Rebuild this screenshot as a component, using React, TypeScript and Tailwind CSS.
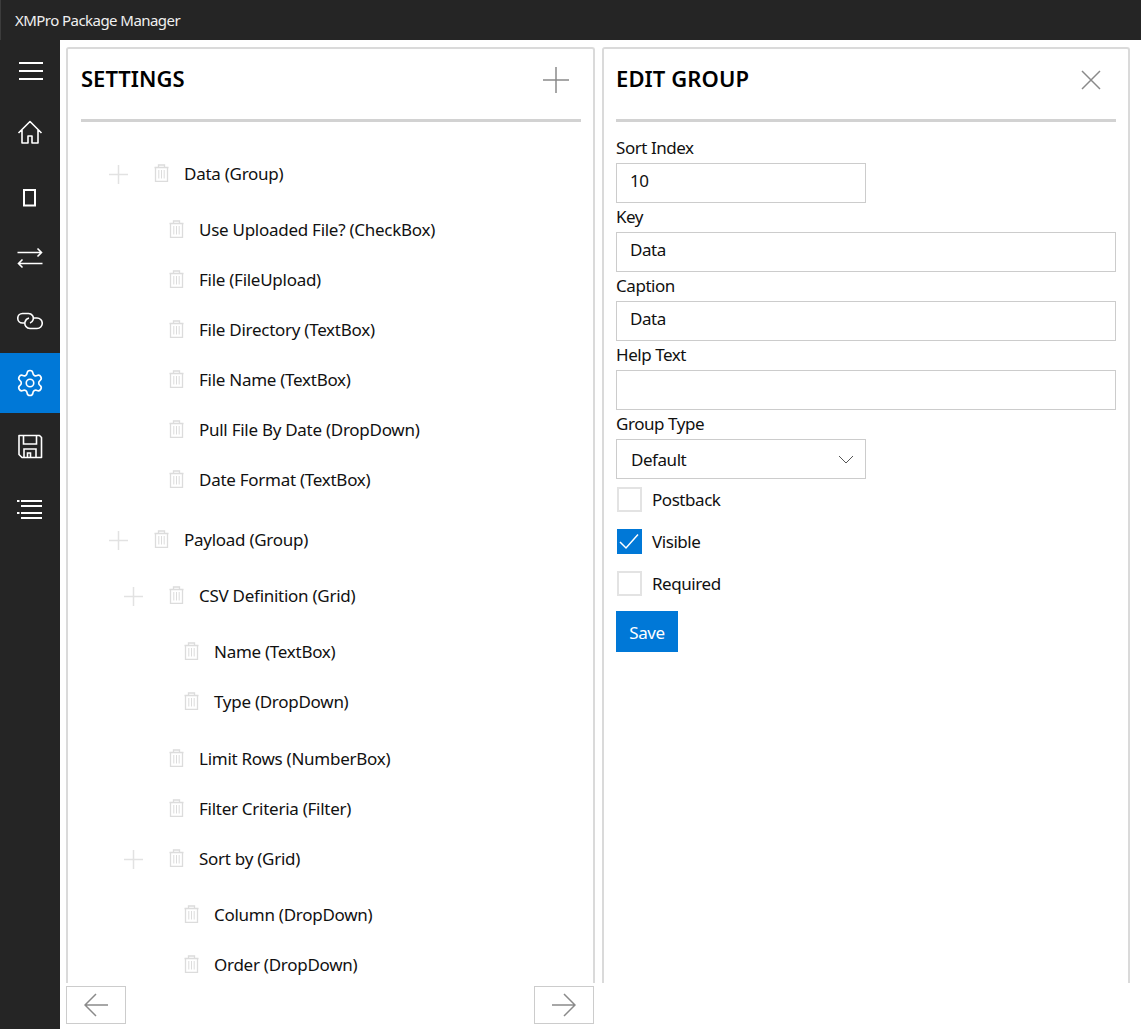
import type { ReactNode } from 'react'
import { Settings } from 'lucide-react'

type TreeNode = { label: string; expand?: boolean; children?: TreeNode[] }

const tree: TreeNode[] = [
  {
    label: 'Data (Group)',
    expand: true,
    children: [
      { label: 'Use Uploaded File? (CheckBox)' },
      { label: 'File (FileUpload)' },
      { label: 'File Directory (TextBox)' },
      { label: 'File Name (TextBox)' },
      { label: 'Pull File By Date (DropDown)' },
      { label: 'Date Format (TextBox)' },
    ],
  },
  {
    label: 'Payload (Group)',
    expand: true,
    children: [
      {
        label: 'CSV Definition (Grid)',
        expand: true,
        children: [{ label: 'Name (TextBox)' }, { label: 'Type (DropDown)' }],
      },
      { label: 'Limit Rows (NumberBox)' },
      { label: 'Filter Criteria (Filter)' },
      {
        label: 'Sort by (Grid)',
        expand: true,
        children: [{ label: 'Column (DropDown)' }, { label: 'Order (DropDown)' }],
      },
    ],
  },
]

function Icon({ children, size = 26 }: { children: ReactNode; size?: number }) {
  return (
    <svg width={size} height={size} viewBox="0 0 26 26" fill="none" stroke="currentColor" strokeWidth="1.6">
      {children}
    </svg>
  )
}

const navItems: { key: string; active?: boolean; icon: ReactNode; className?: string }[] = [
  {
    key: 'menu',
    className: 'mb-0',
    icon: (
      <Icon>
        <path d="M2 5h25M2 13h25M2 21h25" strokeWidth="2" />
      </Icon>
    ),
  },
  {
    key: 'home',
    icon: (
      <Icon>
        <path d="M1.500 15 13 3.500 24.500 15M5 11.500V25h6v-7h4v7h6V11.500" strokeLinejoin="round" />
      </Icon>
    ),
  },
  {
    key: 'device',
    icon: (
      <Icon>
        <rect x="7" y="9" width="11" height="15.500" strokeWidth="2" />
      </Icon>
    ),
  },
  {
    key: 'flow',
    icon: (
      <Icon>
        <path d="M0.500 8.500h24M20.500 4.500l4 4-4 4M25.500 19.500h-24M5.500 15.500l-4 4 4 4" />
      </Icon>
    ),
  },
  {
    key: 'link',
    icon: (
      <Icon>
        <path d="M7 16H5.500a4.700 4.700 0 0 1 0-9.500h6a4.800 4.800 0 0 1 4.500 6.500c-.5 1.500-1.500 2.500-3 3" />
        <path d="M17 11h3a5.200 5.200 0 0 1 0 10.500h-7a5.200 5.200 0 0 1-5-6.500c.5-2 2-3.500 4-4" />
      </Icon>
    ),
  },
  {
    key: 'settings',
    active: true,
    icon: <Settings size={30} strokeWidth={1.3} />,
  },
  {
    key: 'save',
    icon: (
      <Icon>
        <path d="M2 2.500h20.500l2 2v20H5l-3-3z" strokeLinejoin="round" />
        <path d="M6.500 3v8h13V3M7 24v-8h12v8M10.500 24v-4h3v4" />
      </Icon>
    ),
  },
  {
    key: 'list',
    icon: (
      <Icon>
        <path d="M4 5h21M4 10h21M4 17h21M4 22h21" strokeWidth="1.800" />
        <path d="M0 5h2.500M0 17h2.500" strokeWidth="1.800" />
      </Icon>
    ),
  },
]

function TrashIcon() {
  return (
    <svg width="15" height="18" viewBox="0 0 15 18" fill="none" stroke="#dcdcdc" strokeWidth="1.300">
      <path d="M0.500 3.500h14M4.500 3.500V1h6v2.500" />
      <path d="M1.500 3.500V17.300h12V3.500" />
      <path d="M4.800 6v8.500M7.500 6v8.500M10.200 6v8.500" strokeWidth="1" />
    </svg>
  )
}

function PlusIcon({ size, color }: { size: number; color: string }) {
  return (
    <svg width={size} height={size} viewBox={`0 0 ${size} ${size}`} stroke={color} strokeWidth="1.500">
      <path d={`M0 ${size / 2}H${size}M${size / 2} 0V${size}`} />
    </svg>
  )
}

function TreeRows({ nodes, depth }: { nodes: TreeNode[]; depth: number }) {
  return (
    <>
      {nodes.map((node) => (
        <div key={node.label} className={depth === 0 ? 'mb-[10px]' : ''}>
          <div className="flex h-[50px] items-center" style={{ paddingLeft: depth * 15 }}>
            <div className="flex w-[19px] justify-center">
              {node.expand && <PlusIcon size={19} color="#e2e2e2" />}
            </div>
            <div className="ml-[26px] mb-[3px] flex w-[15px] justify-center">
              <TrashIcon />
            </div>
            <span className="ml-[15px] whitespace-nowrap tracking-[-0.27px]">{node.label}</span>
          </div>
          {node.children && (
            <div className="mt-[6px] mb-[7px]">
              <TreeRows nodes={node.children} depth={depth + 1} />
            </div>
          )}
        </div>
      ))}
    </>
  )
}

function Field({ label, value, select }: { label: string; value?: string; select?: boolean }) {
  return (
    <div>
      <div className="flex h-[29px] items-center pb-[2px]">{label}</div>
      <div
        className={`flex h-[40px] items-center justify-between border border-[#cccccc] pr-[11px] ${
          select ? 'w-[250px] pl-[14px] pt-px' : label === 'Sort Index' ? 'w-[250px] pb-[4px] pl-[13px]' : 'w-full pb-[4px] pl-[13px]'
        }`}
      >
        <span>{value}</span>
        {select && (
          <svg className="-mt-px" width="16" height="9" viewBox="0 0 16 9" fill="none" stroke="#555555" strokeWidth="1">
            <path d="M1 1l7 7 7-7" />
          </svg>
        )}
      </div>
    </div>
  )
}

function Check({ label, checked }: { label: string; checked?: boolean }) {
  return (
    <div className="ml-px flex h-[42px] items-center gap-[10px]">
      {checked ? (
        <div className="flex h-[25px] w-[25px] items-center justify-center bg-[#0078d7]">
          <svg width="25" height="25" viewBox="0 0 25 25" fill="none" stroke="#ffffff" strokeWidth="1.500">
            <path d="M3 13l6 6L21 5.500" />
          </svg>
        </div>
      ) : (
        <div className="h-[25px] w-[25px] border-2 border-[#e3e3e3]" />
      )}
      <span className="pt-[2px]">{label}</span>
    </div>
  )
}

export default function App() {
  return (
    <div className="flex h-[1029px] w-[1141px] flex-col overflow-hidden bg-white font-['Noto_Sans','Open_Sans',sans-serif] text-[17px] tracking-[-0.45px] text-[#111111]">
      <div className="flex h-10 shrink-0 items-center border-l border-[#3c3c3c] bg-[#252525] pl-[14px] text-[15px] tracking-[-0.55px] text-[#f0f0f0]">
        XMPro Package Manager
      </div>

      <div className="flex min-h-0 flex-1">
        <nav className="flex w-[60px] shrink-0 flex-col bg-[#252525] pt-[1px] text-white">
          {navItems.map((item) => (
            <div
              key={item.key}
              className={`flex h-[60px] items-center justify-center ${item.className ?? 'mb-[3px]'} ${item.active ? 'bg-[#0078d7]' : ''}`}
            >
              {item.icon}
            </div>
          ))}
        </nav>

        <div className="flex min-w-0 flex-1 flex-col pl-[6px]">
          <div className="flex min-h-0 flex-1 gap-[7px] pt-[7px]">
            <section className="flex w-[529px] flex-col overflow-hidden rounded-t-[3px] border-2 border-b-0 border-[#dadada] pl-[13px] pr-[12px]">
              <div className="flex h-[73px] shrink-0 items-center justify-between border-b-[3px] border-[#d2d2d2] pb-[18px] pt-[6px]">
                <h2 className="text-[22px] font-semibold tracking-[0px] text-black">SETTINGS</h2>
                <div className="mr-[12px] mt-[3px]">
                  <PlusIcon size={26} color="#8a8a8a" />
                </div>
              </div>
              <div className="min-h-0 flex-1 overflow-hidden pl-[28px] pt-[27px]">
                <TreeRows nodes={tree} depth={0} />
              </div>
            </section>

            <section className="flex w-[528px] flex-col overflow-hidden rounded-t-[3px] border-2 border-b-0 border-[#dadada] px-[12px]">
              <div className="flex h-[73px] shrink-0 items-center justify-between border-b-[3px] border-[#d2d2d2] pb-[18px] pt-[6px]">
                <h2 className="text-[22px] font-semibold tracking-[0.1px] text-black">EDIT GROUP</h2>
                <svg className="mr-[15px] mt-[3px]" width="20" height="20" viewBox="0 0 20 20" stroke="#8a8a8a" strokeWidth="1.500">
                  <path d="M1 1l18 18M19 1 1 19" />
                </svg>
              </div>
              <div className="pt-[12px]">
                <Field label="Sort Index" value="10" />
                <Field label="Key" value="Data" />
                <Field label="Caption" value="Data" />
                <Field label="Help Text" />
                <Field label="Group Type" value="Default" select />
                <div className="mt-[-1px]">
                  <Check label="Postback" />
                  <Check label="Visible" checked />
                  <Check label="Required" />
                </div>
                <button className="mt-[7px] h-[41px] w-[62px] bg-[#0078d7] pt-[2px] text-[17px] text-white">Save</button>
              </div>
            </section>
          </div>

          <div className="flex h-[46px] w-[528px] shrink-0 items-start justify-between pt-[3px]">
            <button className="flex h-[38px] w-[60px] items-center justify-center border border-[#cccccc]">
              <svg width="24" height="24" viewBox="0 0 24 24" fill="none" stroke="#8a8a8a" strokeWidth="1.500">
                <path d="M24 12H1M12 1 1 12l11 11" />
              </svg>
            </button>
            <button className="flex h-[38px] w-[60px] items-center justify-center border border-[#cccccc]">
              <svg width="24" height="24" viewBox="0 0 24 24" fill="none" stroke="#8a8a8a" strokeWidth="1.500">
                <path d="M0 12h23M12 1l11 11-11 11" />
              </svg>
            </button>
          </div>
        </div>
      </div>
    </div>
  )
}
